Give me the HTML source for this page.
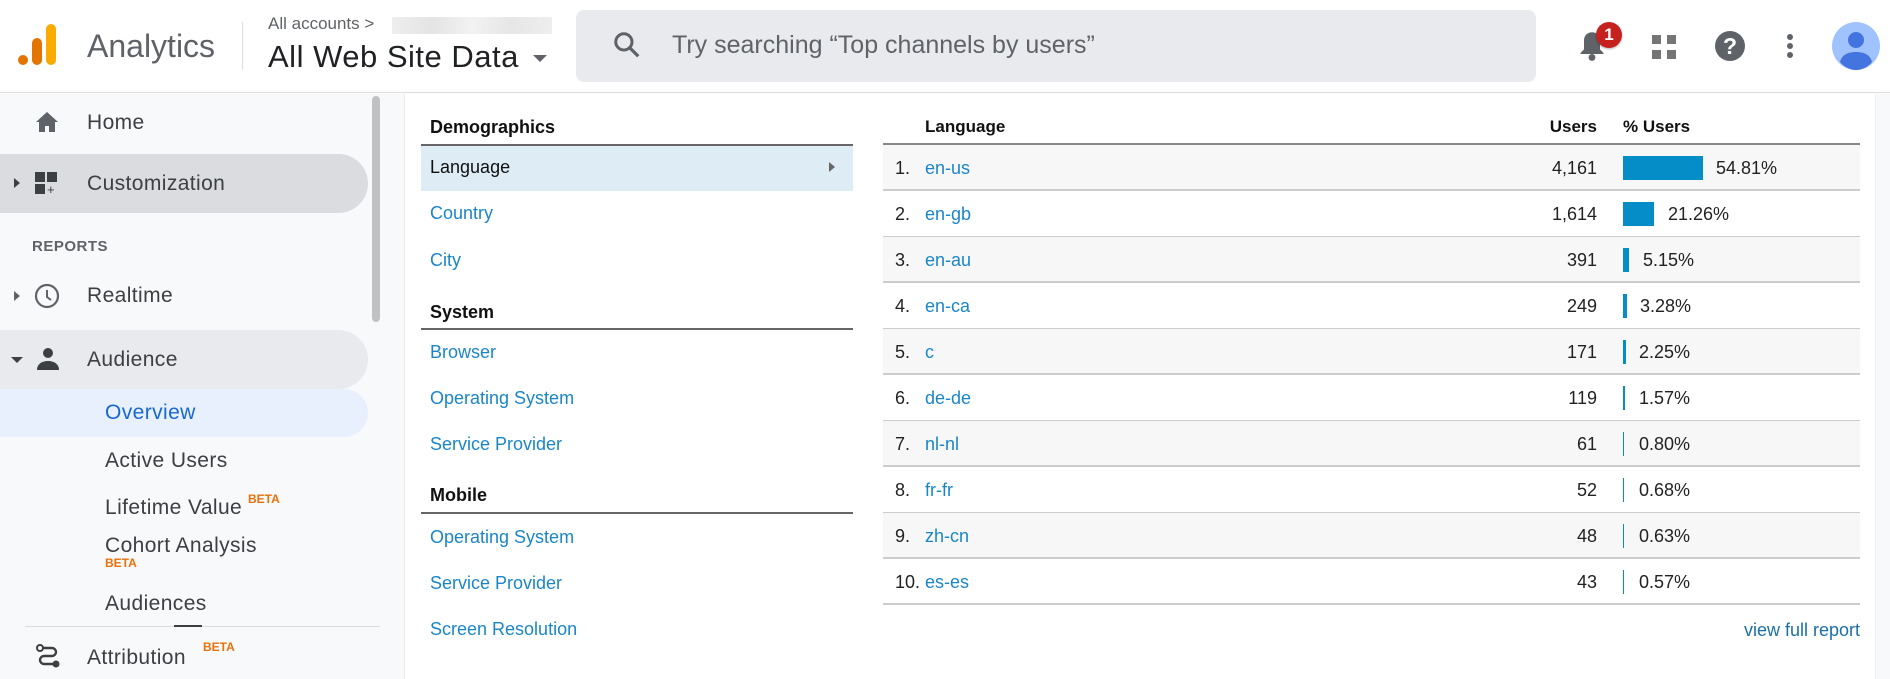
<!DOCTYPE html>
<html><head><meta charset="utf-8"><style>
*{margin:0;padding:0;box-sizing:border-box}
body{width:1890px;height:679px;overflow:hidden;background:#fff;font-family:"Liberation Sans",Arial,sans-serif;position:relative}
.a{position:absolute;white-space:nowrap}
.hdr{position:absolute;left:0;top:0;width:1890px;height:93px;border-bottom:1px solid #dadce0;background:#fff}
.side{position:absolute;left:0;top:94px;width:405px;height:585px;background:#f8f9fa;border-right:1px solid #e8eaed}
.sl{color:#3c4043;font-size:21px;line-height:24px;letter-spacing:.4px}
.pill{position:absolute;left:0;width:368px;border-radius:0 30px 30px 0}
.beta{color:#e8710a;font-size:12px;font-weight:bold}
.ml{color:#1a86c8;font-size:18px}
.mh{color:#111;font-size:18px;font-weight:bold}
.row{position:absolute;left:883px;width:977px;height:46px;font-size:18px;color:#222}
.row span{position:absolute;top:13px;line-height:20px}
.bar{position:absolute;left:740px;top:11px;height:24px;background:#058dc7}
</style></head><body>
<div class="hdr">
<svg class="a" style="left:17px;top:22px" width="42" height="46" viewBox="0 0 42 46"><circle cx="6" cy="38" r="5" fill="#e37400"/><rect x="15" y="16" width="10" height="27" rx="5" fill="#e37400"/><rect x="29" y="2" width="10" height="41" rx="5" fill="#f9ab00"/></svg>
<div class="a" style="left:87px;top:28px;font-size:32px;color:#5f6368">Analytics</div>
<div class="a" style="left:242px;top:22px;width:1px;height:48px;background:#dadce0"></div>
<div class="a" style="left:268px;top:14px;font-size:17px;color:#5f6368">All accounts &gt;</div>
<div class="a" style="left:392px;top:17px;width:160px;height:17px;background:linear-gradient(90deg,#eee,#e4e4e4,#f2f2f2,#e6e6e6,#eee)"></div>
<div class="a" style="left:268px;top:39px;font-size:31px;color:#202124;letter-spacing:.5px">All Web Site Data</div>
<div class="a" style="left:533px;top:55px;border:7px solid transparent;border-top:7px solid #5f6368"></div>
<div class="a" style="left:576px;top:10px;width:960px;height:72px;background:#e8eaed;border-radius:8px"></div>
<svg class="a" style="left:612px;top:30px" width="30" height="30" viewBox="0 0 24 24"><circle cx="9.5" cy="9.5" r="6.5" fill="none" stroke="#5f6368" stroke-width="2.4"/><path d="M14.5 14.5L21 21" stroke="#5f6368" stroke-width="2.6"/></svg>
<div class="a" style="left:672px;top:31px;font-size:25px;color:#5f6368">Try searching “Top channels by users”</div>
<svg class="a" style="left:1578px;top:30px" width="28" height="32" viewBox="0 0 24 28"><path d="M12 2c-4 0-7 3-7 7v8l-3 3v1h20v-1l-3-3V9c0-4-3-7-7-7z" fill="#5f6368"/><circle cx="12" cy="24" r="3" fill="#5f6368"/></svg>
<div class="a" style="left:1596px;top:22px;width:26px;height:26px;border-radius:50%;background:#c5221f;color:#fff;font-size:17px;font-weight:bold;text-align:center;line-height:26px;box-shadow:0 1px 2px rgba(0,0,0,.3)">1</div>
<div class="a" style="left:1652px;top:35px;width:9px;height:9px;background:#757575"></div><div class="a" style="left:1667px;top:35px;width:9px;height:9px;background:#757575"></div>
<div class="a" style="left:1652px;top:50px;width:9px;height:9px;background:#757575"></div><div class="a" style="left:1667px;top:50px;width:9px;height:9px;background:#757575"></div>
<div class="a" style="left:1715px;top:31px;width:30px;height:30px;border-radius:50%;background:#5f6368;color:#fff;font-size:23px;font-weight:bold;text-align:center;line-height:30px">?</div>
<div class="a" style="left:1787px;top:34px;width:6px;height:6px;border-radius:50%;background:#5f6368;box-shadow:0 9px 0 #5f6368,0 18px 0 #5f6368"></div>
<svg class="a" style="left:1832px;top:22px" width="48" height="48" viewBox="0 0 48 48"><circle cx="24" cy="24" r="24" fill="#a0c3ff"/><circle cx="24" cy="18" r="8" fill="#4374e0"/><path d="M8 40c2-8 9-10 16-10s14 2 16 10c-4 5-10 8-16 8s-12-3-16-8z" fill="#4374e0"/></svg>
</div>

<div class="side">
<div class="pill" style="top:60px;height:59px;background:#dadce0"></div>
<div class="pill" style="top:236px;height:59px;background:#e8eaed"></div>
<div class="pill" style="top:295px;height:48px;background:#e8f0fe"></div>
<div class="a" style="left:372px;top:2px;width:8px;height:226px;border-radius:4px;background:#c1c1c1"></div>
<svg class="a" style="left:35px;top:17px" width="24" height="22" viewBox="0 0 24 22"><path d="M12 1L1 11h3v10h6v-6h4v6h6V11h3z" fill="#5f6368"/></svg>
<div class="a sl" style="left:87px;top:17px">Home</div>
<div class="a" style="left:14px;top:84px;border:5px solid transparent;border-left:6px solid #3c4043"></div>
<div class="a" style="left:35px;top:78px;width:10px;height:10px;background:#3c4043"></div><div class="a" style="left:47px;top:78px;width:10px;height:10px;background:#3c4043"></div><div class="a" style="left:35px;top:90px;width:10px;height:10px;background:#3c4043"></div>
<div class="a" style="left:47px;top:88px;font-size:13px;color:#3c4043">+</div>
<div class="a sl" style="left:87px;top:78px">Customization</div>
<div class="a" style="left:32px;top:144px;font-size:15px;color:#5f6368;font-weight:bold;letter-spacing:.5px">REPORTS</div>
<div class="a" style="left:14px;top:197px;border:5px solid transparent;border-left:6px solid #5f6368"></div>
<svg class="a" style="left:34px;top:189px" width="26" height="26" viewBox="0 0 26 26"><circle cx="13" cy="13" r="11" fill="none" stroke="#5f6368" stroke-width="2.2"/><path d="M13 7v7l4 3" fill="none" stroke="#5f6368" stroke-width="2"/></svg>
<div class="a sl" style="left:87px;top:190px">Realtime</div>
<div class="a" style="left:11px;top:263px;border:6px solid transparent;border-top:6px solid #3c4043"></div>
<svg class="a" style="left:36px;top:253px" width="24" height="24" viewBox="0 0 24 24"><circle cx="12" cy="6" r="5" fill="#3c4043"/><path d="M1 23c0-6 5-9 11-9s11 3 11 9z" fill="#3c4043"/></svg>
<div class="a sl" style="left:87px;top:254px">Audience</div>
<div class="a sl" style="left:105px;top:307px;color:#1967d2">Overview</div>
<div class="a sl" style="left:105px;top:355px">Active Users</div>
<div class="a sl" style="left:105px;top:402px">Lifetime Value</div><div class="a beta" style="left:248px;top:398px">BETA</div>
<div class="a sl" style="left:105px;top:440px">Cohort Analysis</div><div class="a beta" style="left:105px;top:462px">BETA</div>
<div class="a sl" style="left:105px;top:498px">Audiences</div>
<div class="a" style="left:25px;top:532px;width:355px;height:1px;background:#dadce0"></div>
<div class="a" style="left:174px;top:531px;width:28px;height:2px;background:#3c4043"></div>
<svg class="a" style="left:35px;top:549px" width="26" height="26" viewBox="0 0 26 26"><circle cx="5" cy="5" r="3" fill="none" stroke="#3c4043" stroke-width="2"/><path d="M8 5h9a4 4 0 0 1 0 8H9a4 4 0 0 0 0 8h9" fill="none" stroke="#3c4043" stroke-width="2.4"/><circle cx="21" cy="21" r="3.5" fill="#3c4043"/></svg>
<div class="a sl" style="left:87px;top:552px">Attribution</div><div class="a beta" style="left:203px;top:546px">BETA</div>
</div>

<div class="a" style="left:1875px;top:94px;width:15px;height:585px;background:#f8f9fa;border-left:1px solid #eee"></div>

<div class="a mh" style="left:430px;top:117px">Demographics</div>
<div class="a" style="left:421px;top:144px;width:432px;height:2px;background:#666"></div>
<div class="a" style="left:421px;top:146px;width:432px;height:45px;background:#deedf5"></div>
<div class="a" style="left:430px;top:157px;font-size:18px;color:#111">Language</div>
<div class="a" style="left:829px;top:162px;border:5px solid transparent;border-left:6px solid #666"></div>
<div class="a ml" style="left:430px;top:203px">Country</div>
<div class="a ml" style="left:430px;top:250px">City</div>
<div class="a mh" style="left:430px;top:302px">System</div>
<div class="a" style="left:421px;top:328px;width:432px;height:2px;background:#666"></div>
<div class="a ml" style="left:430px;top:342px">Browser</div>
<div class="a ml" style="left:430px;top:388px">Operating System</div>
<div class="a ml" style="left:430px;top:434px">Service Provider</div>
<div class="a mh" style="left:430px;top:485px">Mobile</div>
<div class="a" style="left:421px;top:512px;width:432px;height:2px;background:#666"></div>
<div class="a ml" style="left:430px;top:527px">Operating System</div>
<div class="a ml" style="left:430px;top:573px">Service Provider</div>
<div class="a ml" style="left:430px;top:619px">Screen Resolution</div>

<div class="a" style="left:925px;top:117px;font-size:17px;font-weight:bold;color:#111">Language</div>
<div class="a" style="left:1500px;top:117px;width:97px;text-align:right;font-size:17px;font-weight:bold;color:#111">Users</div>
<div class="a" style="left:1623px;top:117px;font-size:17px;font-weight:bold;color:#111">% Users</div>
<div class="a" style="left:883px;top:143px;width:977px;height:2px;background:#888"></div>

<div class="row" style="top:145px;background:#f7f7f7;border-bottom:2px solid #ccc"><span style="left:12px">1.</span><span style="left:42px;color:#1a86c8">en-us</span><span style="right:263px">4,161</span><div class="bar" style="width:80px"></div><span style="left:833px">54.81%</span></div>
<div class="row" style="top:191px;border-bottom:1px solid #ccc"><span style="left:12px">2.</span><span style="left:42px;color:#1a86c8">en-gb</span><span style="right:263px">1,614</span><div class="bar" style="width:31px"></div><span style="left:785px">21.26%</span></div>
<div class="row" style="top:237px;background:#f7f7f7;border-bottom:2px solid #ccc"><span style="left:12px">3.</span><span style="left:42px;color:#1a86c8">en-au</span><span style="right:263px">391</span><div class="bar" style="width:6px"></div><span style="left:760px">5.15%</span></div>
<div class="row" style="top:283px;border-bottom:1px solid #ccc"><span style="left:12px">4.</span><span style="left:42px;color:#1a86c8">en-ca</span><span style="right:263px">249</span><div class="bar" style="width:4px"></div><span style="left:757px">3.28%</span></div>
<div class="row" style="top:329px;background:#f7f7f7;border-bottom:2px solid #ccc"><span style="left:12px">5.</span><span style="left:42px;color:#1a86c8">c</span><span style="right:263px">171</span><div class="bar" style="width:3px"></div><span style="left:756px">2.25%</span></div>
<div class="row" style="top:375px;border-bottom:1px solid #ccc"><span style="left:12px">6.</span><span style="left:42px;color:#1a86c8">de-de</span><span style="right:263px">119</span><div class="bar" style="width:2px"></div><span style="left:756px">1.57%</span></div>
<div class="row" style="top:421px;background:#f7f7f7;border-bottom:2px solid #ccc"><span style="left:12px">7.</span><span style="left:42px;color:#1a86c8">nl-nl</span><span style="right:263px">61</span><div class="bar" style="width:1px"></div><span style="left:756px">0.80%</span></div>
<div class="row" style="top:467px;border-bottom:1px solid #ccc"><span style="left:12px">8.</span><span style="left:42px;color:#1a86c8">fr-fr</span><span style="right:263px">52</span><div class="bar" style="width:1px"></div><span style="left:756px">0.68%</span></div>
<div class="row" style="top:513px;background:#f7f7f7;border-bottom:2px solid #ccc"><span style="left:12px">9.</span><span style="left:42px;color:#1a86c8">zh-cn</span><span style="right:263px">48</span><div class="bar" style="width:1px"></div><span style="left:756px">0.63%</span></div>
<div class="row" style="top:559px;border-bottom:2px solid #ccc"><span style="left:12px">10.</span><span style="left:42px;color:#1a86c8">es-es</span><span style="right:263px">43</span><div class="bar" style="width:1px"></div><span style="left:756px">0.57%</span></div>
<div class="a" style="left:1700px;top:620px;width:160px;text-align:right;font-size:18px;color:#1a6fa8">view full report</div>
</body></html>
